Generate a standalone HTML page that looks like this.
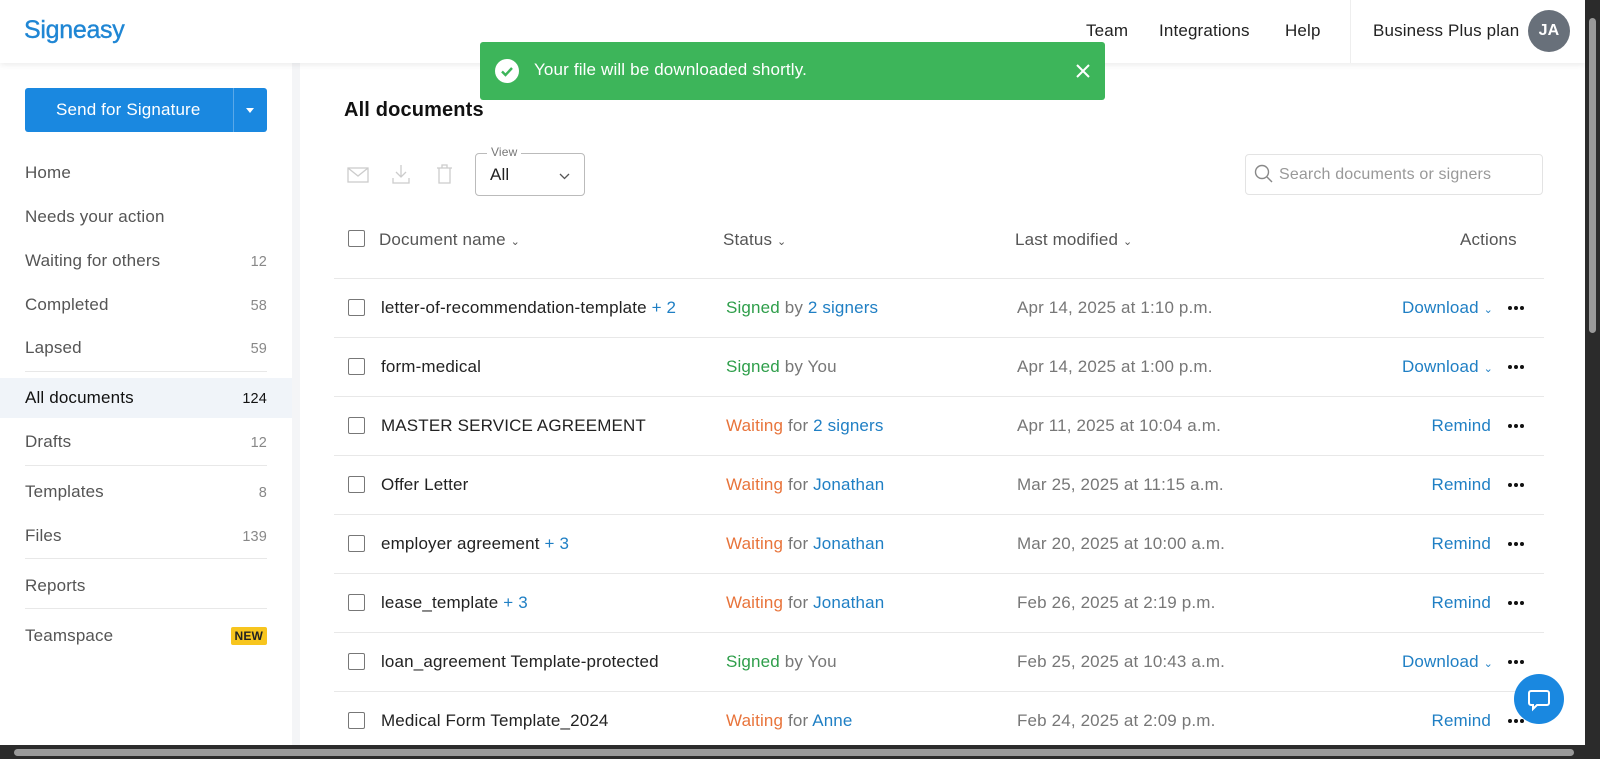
<!DOCTYPE html>
<html><head><meta charset="utf-8"><style>
*{box-sizing:border-box;margin:0;padding:0}
body{width:1600px;height:759px;overflow:hidden;background:#fff;font-family:"Liberation Sans",sans-serif;color:#222;position:relative;letter-spacing:.15px}
.a{position:absolute;white-space:nowrap}
.hdr{position:absolute;left:0;top:0;width:1585px;height:63px;background:#fff;box-shadow:0 2px 6px rgba(0,0,0,.08);z-index:2}
.nav{font-size:17px;color:#222;top:21px}
.side .it{position:absolute;left:25px;font-size:17px;color:#555}
.side .n{position:absolute;right:0;font-size:14.5px;color:#888;top:3px}
.sep{position:absolute;left:25px;width:242px;height:1px;background:#e8e8e8}
.cb{position:absolute;left:348px;width:17px;height:17px;border:1.5px solid #777;border-radius:2px}
.row{position:absolute;left:334px;width:1210px;height:1px;background:#e8e8e8}
.t{position:absolute;font-size:17px;white-space:nowrap}
.r{position:absolute;right:107px;font-size:17px;white-space:nowrap;color:#1f7fc4}
.g{color:#2e9e4a}.o{color:#e8743b}.b{color:#1f7fc4}.gr{color:#777}
.dots{position:absolute;left:1508px;width:16px;height:4px}
.dots i{position:absolute;top:0;width:4px;height:4px;border-radius:50%;background:#111}
</style></head><body>
<div class="hdr">
 <div class="a" style="left:24px;top:16px;font-size:25px;color:#1f86d4;letter-spacing:-0.3px;-webkit-text-stroke:.4px #1f86d4">Signeasy</div>
 <div class="a nav" style="left:1086px">Team</div>
 <div class="a nav" style="left:1159px">Integrations</div>
 <div class="a nav" style="left:1285px">Help</div>
 <div class="a" style="left:1350px;top:0;width:1px;height:63px;background:#eee"></div>
 <div class="a nav" style="left:1373px">Business Plus plan</div>
 <div class="a" style="left:1528px;top:10px;width:42px;height:42px;border-radius:50%;background:#68707a;color:#fff;font-size:16px;font-weight:bold;text-align:center;line-height:42px">JA</div>
</div>
<div class="a" style="left:292px;top:63px;width:8px;height:682px;background:#f4f5f7"></div>
<div class="side">
 <div class="a" style="left:25px;top:88px;width:242px;height:44px;background:#1a88e0;border-radius:3px;color:#fff;font-size:17px">
  <div class="a" style="left:31px;top:12px">Send for Signature</div>
  <div class="a" style="left:208px;top:0;width:1px;height:44px;background:#5aa8e8"></div>
  <div class="a" style="left:221px;top:20px;width:0;height:0;border-left:4px solid transparent;border-right:4px solid transparent;border-top:5px solid #fff"></div>
 </div>
 <div class="it" style="top:163px">Home</div>
 <div class="it" style="top:207px">Needs your action</div>
 <div class="it" style="top:251px;width:242px">Waiting for others<span class="n">12</span></div>
 <div class="it" style="top:295px;width:242px">Completed<span class="n">58</span></div>
 <div class="it" style="top:338px;width:242px">Lapsed<span class="n">59</span></div>
 <div class="sep" style="top:371px"></div>
 <div class="a" style="left:0;top:378px;width:292px;height:40px;background:#f0f4f9"></div>
 <div class="it" style="top:388px;width:242px;color:#111">All documents<span class="n" style="color:#111">124</span></div>
 <div class="it" style="top:432px;width:242px">Drafts<span class="n">12</span></div>
 <div class="sep" style="top:465px"></div>
 <div class="it" style="top:482px;width:242px">Templates<span class="n">8</span></div>
 <div class="it" style="top:526px;width:242px">Files<span class="n">139</span></div>
 <div class="sep" style="top:558px"></div>
 <div class="it" style="top:576px">Reports</div>
 <div class="sep" style="top:608px"></div>
 <div class="it" style="top:626px;width:242px">Teamspace<span class="n" style="top:1px;background:#f7c51e;color:#222;font-weight:bold;font-size:12px;padding:2px 4px;border-radius:2px">NEW</span></div>
</div>
<div class="a" style="left:480px;top:42px;width:625px;height:58px;background:#3db55a;border-radius:3px;z-index:3;color:#fff">
 <div class="a" style="left:15px;top:17px;width:24px;height:24px;border-radius:50%;background:#fff"></div>
 <svg class="a" style="left:15px;top:17px" width="24" height="24"><path d="M7 12.5l3.5 3.5 6.5-7" stroke="#3db55a" stroke-width="2.4" fill="none"/></svg>
 <div class="a" style="left:54px;top:18px;font-size:17px">Your file will be downloaded shortly.</div>
 <svg class="a" style="left:596px;top:22px" width="14" height="14"><path d="M1 1l12 12M13 1L1 13" stroke="#fff" stroke-width="2"/></svg>
</div>
<div class="a" style="left:344px;top:99px;font-size:20px;font-weight:bold;color:#111">All documents</div>
<svg class="a" style="left:347px;top:167px" width="22" height="16"><rect x="1" y="1" width="20" height="14" fill="none" stroke="#ccc" stroke-width="1.3"/><path d="M1 1l10 8 10-8" fill="none" stroke="#ccc" stroke-width="1.3"/></svg>
<svg class="a" style="left:392px;top:164px" width="18" height="20"><path d="M9 1v12M4 8l5 5 5-5M1 14v5h16v-5" fill="none" stroke="#ccc" stroke-width="1.3"/></svg>
<svg class="a" style="left:436px;top:164px" width="17" height="20"><path d="M1 4h15M6 4V1h5v3M3 4v15h11V4" fill="none" stroke="#ccc" stroke-width="1.3"/></svg>
<div class="a" style="left:475px;top:153px;width:110px;height:43px;border:1px solid #bbb;border-radius:4px"></div>
<div class="a" style="left:487px;top:145px;background:#fff;padding:0 4px;font-size:12px;color:#777">View</div>
<div class="a" style="left:490px;top:165px;font-size:17px">All</div>
<svg class="a" style="left:559px;top:173px" width="11" height="7"><path d="M1 1l4.5 4.5L10 1" fill="none" stroke="#555" stroke-width="1.3"/></svg>
<div class="a" style="left:1245px;top:154px;width:298px;height:41px;border:1px solid #e3e3e3;border-radius:4px"></div>
<svg class="a" style="left:1254px;top:164px" width="20" height="20"><circle cx="8" cy="8" r="6.5" fill="none" stroke="#888" stroke-width="1.4"/><path d="M13 13l5 5" stroke="#888" stroke-width="1.4"/></svg>
<div class="a" style="left:1279px;top:166px;font-size:16px;color:#999">Search documents or signers</div>

<div class="cb" style="top:230px"></div>
<div class="t" style="left:379px;top:230px;color:#555">Document name <span style="font-size:11px">⌄</span></div>
<div class="t" style="left:723px;top:230px;color:#555">Status <span style="font-size:11px">⌄</span></div>
<div class="t" style="left:1015px;top:230px;color:#555">Last modified <span style="font-size:11px">⌄</span></div>
<div class="t" style="left:1460px;top:230px;color:#555">Actions</div>
<div class="row" style="top:278px"></div>

<div class="cb" style="top:299px"></div><div class="t" style="left:381px;top:298px">letter-of-recommendation-template <span class="b">+ 2</span></div><div class="t" style="left:726px;top:298px"><span class="g">Signed</span> <span class="gr">by</span> <span class="b">2 signers</span></div><div class="t gr" style="left:1017px;top:298px">Apr 14, 2025 at 1:10 p.m.</div><div class="r" style="top:298px">Download <span style="font-size:11px">⌄</span></div><div class="dots" style="top:306px"><i style="left:0"></i><i style="left:6px"></i><i style="left:12px"></i></div>
<div class="row" style="top:337px"></div>
<div class="cb" style="top:358px"></div><div class="t" style="left:381px;top:357px">form-medical</div><div class="t" style="left:726px;top:357px"><span class="g">Signed</span> <span class="gr">by You</span></div><div class="t gr" style="left:1017px;top:357px">Apr 14, 2025 at 1:00 p.m.</div><div class="r" style="top:357px">Download <span style="font-size:11px">⌄</span></div><div class="dots" style="top:365px"><i style="left:0"></i><i style="left:6px"></i><i style="left:12px"></i></div>
<div class="row" style="top:396px"></div>
<div class="cb" style="top:417px"></div><div class="t" style="left:381px;top:416px">MASTER SERVICE AGREEMENT</div><div class="t" style="left:726px;top:416px"><span class="o">Waiting</span> <span class="gr">for</span> <span class="b">2 signers</span></div><div class="t gr" style="left:1017px;top:416px">Apr 11, 2025 at 10:04 a.m.</div><div class="r" style="top:416px;right:109px">Remind</div><div class="dots" style="top:424px"><i style="left:0"></i><i style="left:6px"></i><i style="left:12px"></i></div>
<div class="row" style="top:455px"></div>
<div class="cb" style="top:476px"></div><div class="t" style="left:381px;top:475px">Offer Letter</div><div class="t" style="left:726px;top:475px"><span class="o">Waiting</span> <span class="gr">for</span> <span class="b">Jonathan</span></div><div class="t gr" style="left:1017px;top:475px">Mar 25, 2025 at 11:15 a.m.</div><div class="r" style="top:475px;right:109px">Remind</div><div class="dots" style="top:483px"><i style="left:0"></i><i style="left:6px"></i><i style="left:12px"></i></div>
<div class="row" style="top:514px"></div>
<div class="cb" style="top:535px"></div><div class="t" style="left:381px;top:534px">employer agreement <span class="b">+ 3</span></div><div class="t" style="left:726px;top:534px"><span class="o">Waiting</span> <span class="gr">for</span> <span class="b">Jonathan</span></div><div class="t gr" style="left:1017px;top:534px">Mar 20, 2025 at 10:00 a.m.</div><div class="r" style="top:534px;right:109px">Remind</div><div class="dots" style="top:542px"><i style="left:0"></i><i style="left:6px"></i><i style="left:12px"></i></div>
<div class="row" style="top:573px"></div>
<div class="cb" style="top:594px"></div><div class="t" style="left:381px;top:593px">lease_template <span class="b">+ 3</span></div><div class="t" style="left:726px;top:593px"><span class="o">Waiting</span> <span class="gr">for</span> <span class="b">Jonathan</span></div><div class="t gr" style="left:1017px;top:593px">Feb 26, 2025 at 2:19 p.m.</div><div class="r" style="top:593px;right:109px">Remind</div><div class="dots" style="top:601px"><i style="left:0"></i><i style="left:6px"></i><i style="left:12px"></i></div>
<div class="row" style="top:632px"></div>
<div class="cb" style="top:653px"></div><div class="t" style="left:381px;top:652px">loan_agreement Template-protected</div><div class="t" style="left:726px;top:652px"><span class="g">Signed</span> <span class="gr">by You</span></div><div class="t gr" style="left:1017px;top:652px">Feb 25, 2025 at 10:43 a.m.</div><div class="r" style="top:652px">Download <span style="font-size:11px">⌄</span></div><div class="dots" style="top:660px"><i style="left:0"></i><i style="left:6px"></i><i style="left:12px"></i></div>
<div class="row" style="top:691px"></div>
<div class="cb" style="top:712px"></div><div class="t" style="left:381px;top:711px">Medical Form Template_2024</div><div class="t" style="left:726px;top:711px"><span class="o">Waiting</span> <span class="gr">for</span> <span class="b">Anne</span></div><div class="t gr" style="left:1017px;top:711px">Feb 24, 2025 at 2:09 p.m.</div><div class="r" style="top:711px;right:109px">Remind</div><div class="dots" style="top:719px"><i style="left:0"></i><i style="left:6px"></i><i style="left:12px"></i></div>

<div class="a" style="left:1514px;top:674px;width:50px;height:50px;border-radius:50%;background:#1a88e0;z-index:3"></div>
<svg class="a" style="left:1527px;top:688px;z-index:4" width="24" height="24"><path d="M4 3h16a2 2 0 0 1 2 2v10a2 2 0 0 1-2 2H10l-4 4v-4H4a2 2 0 0 1-2-2V5a2 2 0 0 1 2-2z" fill="none" stroke="#fff" stroke-width="2"/></svg>

<div class="a" style="left:1585px;top:0;width:15px;height:759px;background:#2b2b2b"></div>
<div class="a" style="left:1589px;top:18px;width:7px;height:315px;background:#9a9a9a;border-radius:4px"></div>
<div class="a" style="left:0;top:745px;width:1600px;height:14px;background:#2b2b2b"></div>
<div class="a" style="left:14px;top:749px;width:1560px;height:7px;background:#9a9a9a;border-radius:4px"></div>
</body></html>
